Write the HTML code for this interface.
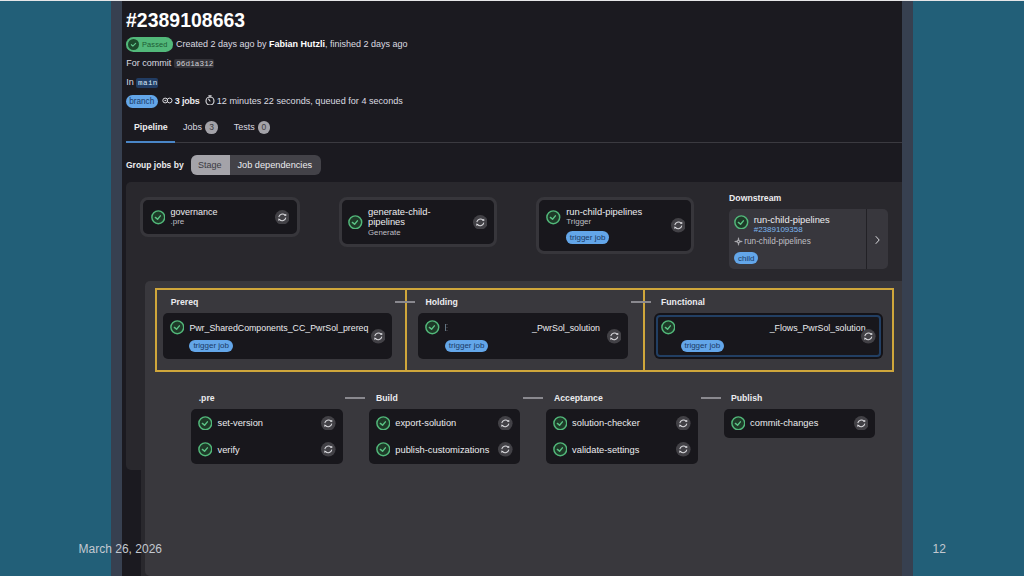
<!DOCTYPE html>
<html><head><meta charset="utf-8">
<style>
*{margin:0;padding:0;box-sizing:border-box}
html,body{width:1024px;height:576px;overflow:hidden;background:#225f78;font-family:"Liberation Sans",sans-serif}
.a{position:absolute}
.t{position:absolute;line-height:1;white-space:nowrap;font-size:9px;color:#ececef}
.ring{position:absolute;border:3px solid #37363b;border-radius:8px;background:#18171c}
.yb{position:absolute;border:2px solid #cfa63b}
</style></head><body>
<div class="a" style="left:0px;top:0px;width:1024px;height:576px;background:#225f78;border-radius:0px;"></div>
<div class="a" style="left:122px;top:0px;width:780px;height:576px;background:#1b1a20;border-radius:0px;"></div>
<div class="t" style="left:126px;top:11.00px;font-size:19.4px;font-weight:700;color:#ffffff;letter-spacing:0.05px;">#2389108663</div>
<div class="a" style="left:126px;top:37px;width:47px;height:14.600000000000001px;background:#52b87a;border-radius:7.3px;"></div>
<svg class="a" style="left:127.7px;top:38.6px" width="11" height="11" viewBox="0 0 14 14"><circle cx="7" cy="7" r="7" fill="#1c4a2c"/><path d="M4.3 7.3 L6.2 9 L9.7 5.5" fill="none" stroke="#5fc48a" stroke-width="1.5" stroke-linecap="round" stroke-linejoin="round"/></svg>
<div class="t" style="left:142px;top:41.00px;font-size:7.4px;color:#1d5b34;letter-spacing:0.15px;">Passed</div>
<div class="t" style="left:176px;top:40.00px;font-size:9px;color:#dcdce0;">Created 2 days ago by <b style="color:#fff">Fabian Hutzli</b>, finished 2 days ago</div>
<div class="t" style="left:126.3px;top:59.00px;font-size:9px;color:#dcdce0;">For commit</div>
<div class="a" style="left:174px;top:59px;width:39.69999999999999px;height:9.299999999999997px;background:#333238;border-radius:2px;"></div>
<div class="t" style="left:176.2px;top:61.00px;font-size:7.6px;color:#d0d0d4;font-family:&quot;Liberation Mono&quot;,monospace;letter-spacing:0.1px;">96d1a312</div>
<div class="t" style="left:126.3px;top:78.00px;font-size:9px;color:#dcdce0;">In</div>
<div class="a" style="left:135.6px;top:78.4px;width:22.700000000000017px;height:9.399999999999991px;background:#213c63;border-radius:2px;"></div>
<div class="t" style="left:138.1px;top:80.00px;font-size:7.6px;color:#d4e4f7;font-family:&quot;Liberation Mono&quot;,monospace;letter-spacing:0.35px;">main</div>
<div class="a" style="left:126px;top:94.8px;width:31.5px;height:12.900000000000006px;background:#63a6e9;border-radius:6.450000000000003px;"><div style="position:absolute;left:0;right:0;top:3.20px;color:#1a3a66;font-size:8.2px;line-height:1;text-align:center;white-space:nowrap">branch</div></div>
<div class="t" style="left:174.8px;top:97.00px;font-size:9px;font-weight:700;color:#ececef;letter-spacing:-0.2px;">3 jobs</div>
<div class="t" style="left:216.8px;top:97.00px;font-size:9.1px;color:#dcdce0;">12 minutes 22 seconds, queued for 4 seconds</div>
<svg class="a" style="left:161.8px;top:96.8px" width="11" height="7" viewBox="0 0 11 7"><circle cx="3.2" cy="3.5" r="2.4" fill="none" stroke="#dcdce0" stroke-width="1"/><circle cx="7.6" cy="3.5" r="2.4" fill="none" stroke="#dcdce0" stroke-width="1"/><circle cx="3.2" cy="3.5" r="0.8" fill="#dcdce0"/></svg>
<svg class="a" style="left:204.8px;top:94.8px" width="10" height="10.5" viewBox="0 0 10 10.5"><circle cx="5" cy="6" r="4" fill="none" stroke="#dcdce0" stroke-width="1.1"/><path d="M3.8 0.8 H6.2 M5 0.8 V2 M5 6 L3.6 4.2" fill="none" stroke="#dcdce0" stroke-width="1.1" stroke-linecap="round"/></svg>
<div class="a" style="left:126px;top:141.5px;width:776px;height:1.0px;background:#3b3a40;border-radius:0px;"></div>
<div class="a" style="left:126px;top:141px;width:49px;height:2px;background:#4a86c7;border-radius:0px;"></div>
<div class="t" style="left:134px;top:123.00px;font-size:8.8px;font-weight:700;color:#ececef;">Pipeline</div>
<div class="t" style="left:183px;top:123.00px;font-size:9px;color:#dcdce0;">Jobs</div>
<div class="a" style="left:205.4px;top:121px;width:12.400000000000006px;height:12.599999999999994px;background:#a3a2a8;border-radius:6.3px;"></div>
<div class="t" style="left:209.2px;top:123.00px;font-size:8.5px;color:#3b3a40;">3</div>
<div class="t" style="left:233.8px;top:123.00px;font-size:9px;color:#dcdce0;">Tests</div>
<div class="a" style="left:257.6px;top:121px;width:12.5px;height:12.599999999999994px;background:#a3a2a8;border-radius:6.3px;"></div>
<div class="t" style="left:261.5px;top:123.00px;font-size:8.5px;color:#3b3a40;">0</div>
<div class="t" style="left:126px;top:161.00px;font-size:8.5px;font-weight:700;color:#ececef;">Group jobs by</div>
<div class="a" style="left:190.7px;top:155.3px;width:130.0px;height:19.899999999999977px;background:#434248;border-radius:6px;"></div>
<div class="a" style="left:190.7px;top:155.3px;width:39.30000000000001px;height:19.899999999999977px;background:#a4a3a9;border-radius:0px;border-radius:6px 0 0 6px;"></div>
<div class="t" style="left:198px;top:161.00px;font-size:9px;color:#3a393f;">Stage</div>
<div class="t" style="left:237.5px;top:161.00px;font-size:9.2px;color:#ececef;">Job dependencies</div>
<div class="a" style="left:126px;top:182px;width:794px;height:288px;background:#29282d;border-radius:5px;"></div>
<div class="ring" style="left:140.2px;top:196.9px;width:159.40000000000003px;height:39.69999999999999px"></div>
<svg class="a" style="left:150.7px;top:210.2px" width="14.6" height="14.6" viewBox="0 0 14 14"><circle cx="7" cy="7" r="6.15" fill="#1e3a28" stroke="#52b87a" stroke-width="1.4"/><path d="M4.2 7.1 L6.3 8.8 L9 5.6" fill="none" stroke="#5cc486" stroke-width="1.35" stroke-linecap="round" stroke-linejoin="round"/></svg>
<div class="t" style="left:170.5px;top:208.00px;font-size:9px;color:#ececef;">governance</div>
<div class="t" style="left:170.5px;top:218.00px;font-size:8px;color:#bfbfc3;">.pre</div>
<svg class="a" style="left:274.70px;top:209.50px" width="14.6" height="14.6" viewBox="0 0 15 15"><circle cx="7.5" cy="7.5" r="7.5" fill="#424146"/><path d="M3.9 7.3 A3.7 3.6 0 0 1 10.3 5.3 M11.1 7.9 A3.7 3.6 0 0 1 4.7 9.8" fill="none" stroke="#d8d8dc" stroke-width="1.05"/><path d="M9.2 5.6 L11.6 6.2 L11.5 3.8 Z M5.8 9.5 L3.4 8.8 L3.5 11.2 Z" fill="#e4e4e8"/></svg>
<div class="ring" style="left:338.6px;top:197px;width:158.39999999999998px;height:49.5px"></div>
<svg class="a" style="left:348.4px;top:214.7px" width="14.6" height="14.6" viewBox="0 0 14 14"><circle cx="7" cy="7" r="6.15" fill="#1e3a28" stroke="#52b87a" stroke-width="1.4"/><path d="M4.2 7.1 L6.3 8.8 L9 5.6" fill="none" stroke="#5cc486" stroke-width="1.35" stroke-linecap="round" stroke-linejoin="round"/></svg>
<div class="t" style="left:368px;top:207.00px;font-size:9.4px;color:#ececef;">generate-child-</div>
<div class="t" style="left:368px;top:217.00px;font-size:9.4px;color:#ececef;">pipelines</div>
<div class="t" style="left:368px;top:229.00px;font-size:7.8px;color:#bfbfc3;">Generate</div>
<svg class="a" style="left:472.70px;top:214.70px" width="14.6" height="14.6" viewBox="0 0 15 15"><circle cx="7.5" cy="7.5" r="7.5" fill="#424146"/><path d="M3.9 7.3 A3.7 3.6 0 0 1 10.3 5.3 M11.1 7.9 A3.7 3.6 0 0 1 4.7 9.8" fill="none" stroke="#d8d8dc" stroke-width="1.05"/><path d="M9.2 5.6 L11.6 6.2 L11.5 3.8 Z M5.8 9.5 L3.4 8.8 L3.5 11.2 Z" fill="#e4e4e8"/></svg>
<div class="ring" style="left:536.3px;top:197px;width:158.20000000000005px;height:57px"></div>
<svg class="a" style="left:546.0px;top:210.1px" width="14.6" height="14.6" viewBox="0 0 14 14"><circle cx="7" cy="7" r="6.15" fill="#1e3a28" stroke="#52b87a" stroke-width="1.4"/><path d="M4.2 7.1 L6.3 8.8 L9 5.6" fill="none" stroke="#5cc486" stroke-width="1.35" stroke-linecap="round" stroke-linejoin="round"/></svg>
<div class="t" style="left:566.2px;top:207.00px;font-size:9.4px;color:#ececef;">run-child-pipelines</div>
<div class="t" style="left:566.2px;top:218.00px;font-size:8px;color:#bfbfc3;">Trigger</div>
<div class="a" style="left:566.2px;top:231.2px;width:42.799999999999955px;height:12.800000000000011px;background:#63a6e9;border-radius:6.400000000000006px;"><div style="position:absolute;left:0;right:0;top:2.80px;color:#1a3a66;font-size:8px;line-height:1;text-align:center;white-space:nowrap">trigger job</div></div>
<svg class="a" style="left:670.50px;top:218.40px" width="14.6" height="14.6" viewBox="0 0 15 15"><circle cx="7.5" cy="7.5" r="7.5" fill="#424146"/><path d="M3.9 7.3 A3.7 3.6 0 0 1 10.3 5.3 M11.1 7.9 A3.7 3.6 0 0 1 4.7 9.8" fill="none" stroke="#d8d8dc" stroke-width="1.05"/><path d="M9.2 5.6 L11.6 6.2 L11.5 3.8 Z M5.8 9.5 L3.4 8.8 L3.5 11.2 Z" fill="#e4e4e8"/></svg>
<div class="t" style="left:729.1px;top:194.00px;font-size:8.7px;font-weight:700;color:#ececef;">Downstream</div>
<div class="a" style="left:729.1px;top:209.3px;width:158.69999999999993px;height:60.099999999999966px;background:#38373d;border-radius:5px;"></div>
<div class="a" style="left:866px;top:209.3px;width:1px;height:60.099999999999966px;background:#222126;border-radius:0px;"></div>
<svg class="a" style="left:734.1px;top:214.6px" width="14.6" height="14.6" viewBox="0 0 14 14"><circle cx="7" cy="7" r="6.15" fill="#1e3a28" stroke="#52b87a" stroke-width="1.4"/><path d="M4.2 7.1 L6.3 8.8 L9 5.6" fill="none" stroke="#5cc486" stroke-width="1.35" stroke-linecap="round" stroke-linejoin="round"/></svg>
<div class="t" style="left:753.7px;top:215.00px;font-size:9.4px;color:#ececef;">run-child-pipelines</div>
<div class="t" style="left:753.7px;top:226.00px;font-size:8px;color:#7cb6ee;">#2389109358</div>
<svg class="a" style="left:733.85px;top:237.3px" width="9" height="9" viewBox="0 0 9 9"><path d="M4.5 0.7 C4.75 3.2 5.3 4.1 8.3 4.5 C5.3 4.9 4.75 5.8 4.5 8.3 C4.25 5.8 3.7 4.9 0.7 4.5 C3.7 4.1 4.25 3.2 4.5 0.7Z" fill="#b8b8bd" stroke="#b8b8bd" stroke-width="0.6" stroke-linejoin="round"/><circle cx="4.5" cy="4.5" r="0.8" fill="#4a494f"/></svg>
<div class="t" style="left:744.3px;top:238.00px;font-size:8.2px;color:#bfbfc3;">run-child-pipelines</div>
<div class="a" style="left:734.4px;top:252.3px;width:23.899999999999977px;height:12.099999999999966px;background:#63a6e9;border-radius:6.049999999999983px;"><div style="position:absolute;left:0;right:0;top:2.70px;color:#1a3a66;font-size:8px;line-height:1;text-align:center;white-space:nowrap">child</div></div>
<svg class="a" style="left:873.5px;top:234.5px" width="7" height="10" viewBox="0 0 7 10"><path d="M2 1.5 L5.2 5 L2 8.5" fill="none" stroke="#dcdce0" stroke-width="1" stroke-linecap="round" stroke-linejoin="round"/></svg>
<div class="a" style="left:141px;top:280.6px;width:789px;height:295.4px;background:#29282d;border-radius:0px;"></div>
<div class="a" style="left:145px;top:280.6px;width:785px;height:295.4px;background:#39383d;border-radius:5px;"></div>
<div class="yb" style="left:155px;top:288px;width:252px;height:84px"></div>
<div class="yb" style="border-left-width:0;left:405px;top:288px;width:240px;height:84px"></div>
<div class="yb" style="left:643px;top:288px;width:251px;height:84px"></div>
<div class="t" style="left:170.8px;top:298.00px;font-size:8.7px;font-weight:700;color:#ececef;">Prereq</div>
<div class="t" style="left:425.5px;top:298.00px;font-size:8.7px;font-weight:700;color:#ececef;">Holding</div>
<div class="t" style="left:661px;top:298.00px;font-size:8.7px;font-weight:700;color:#ececef;">Functional</div>
<div class="a" style="left:395px;top:301px;width:20px;height:2px;background:#8a898f;border-radius:0px;"></div>
<div class="a" style="left:631px;top:301px;width:20px;height:2px;background:#8a898f;border-radius:0px;"></div>
<div class="a" style="left:163.2px;top:313px;width:229.3px;height:46.19999999999999px;background:#18171c;border-radius:5px;"></div>
<svg class="a" style="left:169.89999999999998px;top:320.09999999999997px" width="14.6" height="14.6" viewBox="0 0 14 14"><circle cx="7" cy="7" r="6.15" fill="#1e3a28" stroke="#52b87a" stroke-width="1.4"/><path d="M4.2 7.1 L6.3 8.8 L9 5.6" fill="none" stroke="#5cc486" stroke-width="1.35" stroke-linecap="round" stroke-linejoin="round"/></svg>
<div class="t" style="left:189.4px;top:324.00px;font-size:8.8px;color:#ececef;">Pwr_SharedComponents_CC_PwrSol_prereq</div>
<div class="a" style="left:189.4px;top:340px;width:43.599999999999994px;height:11.800000000000011px;background:#63a6e9;border-radius:5.900000000000006px;"><div style="position:absolute;left:0;right:0;top:2.00px;color:#1a3a66;font-size:8px;line-height:1;text-align:center;white-space:nowrap">trigger job</div></div>
<svg class="a" style="left:370.70px;top:329.00px" width="14.6" height="14.6" viewBox="0 0 15 15"><circle cx="7.5" cy="7.5" r="7.5" fill="#424146"/><path d="M3.9 7.3 A3.7 3.6 0 0 1 10.3 5.3 M11.1 7.9 A3.7 3.6 0 0 1 4.7 9.8" fill="none" stroke="#d8d8dc" stroke-width="1.05"/><path d="M9.2 5.6 L11.6 6.2 L11.5 3.8 Z M5.8 9.5 L3.4 8.8 L3.5 11.2 Z" fill="#e4e4e8"/></svg>
<div class="a" style="left:418px;top:313px;width:210px;height:46.19999999999999px;background:#18171c;border-radius:5px;"></div>
<svg class="a" style="left:425.09999999999997px;top:320.09999999999997px" width="14.6" height="14.6" viewBox="0 0 14 14"><circle cx="7" cy="7" r="6.15" fill="#1e3a28" stroke="#52b87a" stroke-width="1.4"/><path d="M4.2 7.1 L6.3 8.8 L9 5.6" fill="none" stroke="#5cc486" stroke-width="1.35" stroke-linecap="round" stroke-linejoin="round"/></svg>
<div class="t" style="left:532px;top:324.00px;font-size:8.8px;color:#ececef;">_PwrSol_solution</div>
<div class="a" style="left:445px;top:324px;width:1.1999999999999886px;height:7px;background:rgba(160,195,215,0.55);border-radius:0px;"></div>
<div class="a" style="left:446px;top:324px;width:2px;height:1px;background:rgba(160,160,170,0.25);border-radius:0px;"></div>
<div class="a" style="left:446px;top:327px;width:1.5px;height:1px;background:rgba(160,160,170,0.2);border-radius:0px;"></div>
<div class="a" style="left:446px;top:330px;width:2px;height:1px;background:rgba(160,160,170,0.22);border-radius:0px;"></div>
<div class="a" style="left:445px;top:340px;width:43.30000000000001px;height:11.800000000000011px;background:#63a6e9;border-radius:5.900000000000006px;"><div style="position:absolute;left:0;right:0;top:2.00px;color:#1a3a66;font-size:8px;line-height:1;text-align:center;white-space:nowrap">trigger job</div></div>
<svg class="a" style="left:606.70px;top:329.00px" width="14.6" height="14.6" viewBox="0 0 15 15"><circle cx="7.5" cy="7.5" r="7.5" fill="#424146"/><path d="M3.9 7.3 A3.7 3.6 0 0 1 10.3 5.3 M11.1 7.9 A3.7 3.6 0 0 1 4.7 9.8" fill="none" stroke="#d8d8dc" stroke-width="1.05"/><path d="M9.2 5.6 L11.6 6.2 L11.5 3.8 Z M5.8 9.5 L3.4 8.8 L3.5 11.2 Z" fill="#e4e4e8"/></svg>
<div class="a" style="left:656px;top:315px;width:225px;height:42px;background:#18171c;border-radius:4px;border:2px solid #223f63;box-shadow:0 0 0 2px #141318;"></div>
<svg class="a" style="left:660.9000000000001px;top:320.4px" width="14.6" height="14.6" viewBox="0 0 14 14"><circle cx="7" cy="7" r="6.15" fill="#1e3a28" stroke="#52b87a" stroke-width="1.4"/><path d="M4.2 7.1 L6.3 8.8 L9 5.6" fill="none" stroke="#5cc486" stroke-width="1.35" stroke-linecap="round" stroke-linejoin="round"/></svg>
<div class="t" style="left:769.7px;top:324.00px;font-size:8.8px;color:#ececef;">_Flows_PwrSol_solution</div>
<div class="a" style="left:680.6px;top:339.8px;width:43.39999999999998px;height:11.899999999999977px;background:#63a6e9;border-radius:5.949999999999989px;"><div style="position:absolute;left:0;right:0;top:2.20px;color:#1a3a66;font-size:8px;line-height:1;text-align:center;white-space:nowrap">trigger job</div></div>
<svg class="a" style="left:861.30px;top:329.10px" width="14.6" height="14.6" viewBox="0 0 15 15"><circle cx="7.5" cy="7.5" r="7.5" fill="#424146"/><path d="M3.9 7.3 A3.7 3.6 0 0 1 10.3 5.3 M11.1 7.9 A3.7 3.6 0 0 1 4.7 9.8" fill="none" stroke="#d8d8dc" stroke-width="1.05"/><path d="M9.2 5.6 L11.6 6.2 L11.5 3.8 Z M5.8 9.5 L3.4 8.8 L3.5 11.2 Z" fill="#e4e4e8"/></svg>
<div class="t" style="left:198.7px;top:394.00px;font-size:8.7px;font-weight:700;color:#ececef;">.pre</div>
<div class="t" style="left:376px;top:394.00px;font-size:8.7px;font-weight:700;color:#ececef;">Build</div>
<div class="t" style="left:554px;top:394.00px;font-size:8.7px;font-weight:700;color:#ececef;">Acceptance</div>
<div class="t" style="left:730.9px;top:394.00px;font-size:8.7px;font-weight:700;color:#ececef;">Publish</div>
<div class="a" style="left:345.3px;top:397px;width:19.69999999999999px;height:2px;background:#8a898f;border-radius:0px;"></div>
<div class="a" style="left:523.2px;top:397px;width:19.799999999999955px;height:2px;background:#8a898f;border-radius:0px;"></div>
<div class="a" style="left:701px;top:397px;width:19.5px;height:2px;background:#8a898f;border-radius:0px;"></div>
<div class="a" style="left:191.2px;top:409px;width:151.60000000000002px;height:54.80000000000001px;background:#18171c;border-radius:5px;"></div>
<svg class="a" style="left:197.89999999999998px;top:415.8px" width="14.6" height="14.6" viewBox="0 0 14 14"><circle cx="7" cy="7" r="6.15" fill="#1e3a28" stroke="#52b87a" stroke-width="1.4"/><path d="M4.2 7.1 L6.3 8.8 L9 5.6" fill="none" stroke="#5cc486" stroke-width="1.35" stroke-linecap="round" stroke-linejoin="round"/></svg>
<div class="t" style="left:217.5px;top:419.00px;font-size:9.3px;color:#ececef;">set-version</div>
<svg class="a" style="left:321.30px;top:415.80px" width="14.6" height="14.6" viewBox="0 0 15 15"><circle cx="7.5" cy="7.5" r="7.5" fill="#424146"/><path d="M3.9 7.3 A3.7 3.6 0 0 1 10.3 5.3 M11.1 7.9 A3.7 3.6 0 0 1 4.7 9.8" fill="none" stroke="#d8d8dc" stroke-width="1.05"/><path d="M9.2 5.6 L11.6 6.2 L11.5 3.8 Z M5.8 9.5 L3.4 8.8 L3.5 11.2 Z" fill="#e4e4e8"/></svg>
<svg class="a" style="left:197.89999999999998px;top:442.2px" width="14.6" height="14.6" viewBox="0 0 14 14"><circle cx="7" cy="7" r="6.15" fill="#1e3a28" stroke="#52b87a" stroke-width="1.4"/><path d="M4.2 7.1 L6.3 8.8 L9 5.6" fill="none" stroke="#5cc486" stroke-width="1.35" stroke-linecap="round" stroke-linejoin="round"/></svg>
<div class="t" style="left:217.5px;top:446.00px;font-size:9.3px;color:#ececef;">verify</div>
<svg class="a" style="left:321.30px;top:442.20px" width="14.6" height="14.6" viewBox="0 0 15 15"><circle cx="7.5" cy="7.5" r="7.5" fill="#424146"/><path d="M3.9 7.3 A3.7 3.6 0 0 1 10.3 5.3 M11.1 7.9 A3.7 3.6 0 0 1 4.7 9.8" fill="none" stroke="#d8d8dc" stroke-width="1.05"/><path d="M9.2 5.6 L11.6 6.2 L11.5 3.8 Z M5.8 9.5 L3.4 8.8 L3.5 11.2 Z" fill="#e4e4e8"/></svg>
<div class="a" style="left:369px;top:409px;width:150.79999999999995px;height:54.80000000000001px;background:#18171c;border-radius:5px;"></div>
<svg class="a" style="left:375.7px;top:415.8px" width="14.6" height="14.6" viewBox="0 0 14 14"><circle cx="7" cy="7" r="6.15" fill="#1e3a28" stroke="#52b87a" stroke-width="1.4"/><path d="M4.2 7.1 L6.3 8.8 L9 5.6" fill="none" stroke="#5cc486" stroke-width="1.35" stroke-linecap="round" stroke-linejoin="round"/></svg>
<div class="t" style="left:395.3px;top:419.00px;font-size:9.3px;color:#ececef;">export-solution</div>
<svg class="a" style="left:498.30px;top:415.80px" width="14.6" height="14.6" viewBox="0 0 15 15"><circle cx="7.5" cy="7.5" r="7.5" fill="#424146"/><path d="M3.9 7.3 A3.7 3.6 0 0 1 10.3 5.3 M11.1 7.9 A3.7 3.6 0 0 1 4.7 9.8" fill="none" stroke="#d8d8dc" stroke-width="1.05"/><path d="M9.2 5.6 L11.6 6.2 L11.5 3.8 Z M5.8 9.5 L3.4 8.8 L3.5 11.2 Z" fill="#e4e4e8"/></svg>
<svg class="a" style="left:375.7px;top:442.2px" width="14.6" height="14.6" viewBox="0 0 14 14"><circle cx="7" cy="7" r="6.15" fill="#1e3a28" stroke="#52b87a" stroke-width="1.4"/><path d="M4.2 7.1 L6.3 8.8 L9 5.6" fill="none" stroke="#5cc486" stroke-width="1.35" stroke-linecap="round" stroke-linejoin="round"/></svg>
<div class="t" style="left:395.3px;top:446.00px;font-size:9.3px;color:#ececef;">publish-customizations</div>
<svg class="a" style="left:498.30px;top:442.20px" width="14.6" height="14.6" viewBox="0 0 15 15"><circle cx="7.5" cy="7.5" r="7.5" fill="#424146"/><path d="M3.9 7.3 A3.7 3.6 0 0 1 10.3 5.3 M11.1 7.9 A3.7 3.6 0 0 1 4.7 9.8" fill="none" stroke="#d8d8dc" stroke-width="1.05"/><path d="M9.2 5.6 L11.6 6.2 L11.5 3.8 Z M5.8 9.5 L3.4 8.8 L3.5 11.2 Z" fill="#e4e4e8"/></svg>
<div class="a" style="left:545.8px;top:409px;width:152.10000000000002px;height:54.80000000000001px;background:#18171c;border-radius:5px;"></div>
<svg class="a" style="left:552.5px;top:415.8px" width="14.6" height="14.6" viewBox="0 0 14 14"><circle cx="7" cy="7" r="6.15" fill="#1e3a28" stroke="#52b87a" stroke-width="1.4"/><path d="M4.2 7.1 L6.3 8.8 L9 5.6" fill="none" stroke="#5cc486" stroke-width="1.35" stroke-linecap="round" stroke-linejoin="round"/></svg>
<div class="t" style="left:572.0999999999999px;top:419.00px;font-size:9.3px;color:#ececef;">solution-checker</div>
<svg class="a" style="left:676.40px;top:415.80px" width="14.6" height="14.6" viewBox="0 0 15 15"><circle cx="7.5" cy="7.5" r="7.5" fill="#424146"/><path d="M3.9 7.3 A3.7 3.6 0 0 1 10.3 5.3 M11.1 7.9 A3.7 3.6 0 0 1 4.7 9.8" fill="none" stroke="#d8d8dc" stroke-width="1.05"/><path d="M9.2 5.6 L11.6 6.2 L11.5 3.8 Z M5.8 9.5 L3.4 8.8 L3.5 11.2 Z" fill="#e4e4e8"/></svg>
<svg class="a" style="left:552.5px;top:442.2px" width="14.6" height="14.6" viewBox="0 0 14 14"><circle cx="7" cy="7" r="6.15" fill="#1e3a28" stroke="#52b87a" stroke-width="1.4"/><path d="M4.2 7.1 L6.3 8.8 L9 5.6" fill="none" stroke="#5cc486" stroke-width="1.35" stroke-linecap="round" stroke-linejoin="round"/></svg>
<div class="t" style="left:572.0999999999999px;top:446.00px;font-size:9.3px;color:#ececef;">validate-settings</div>
<svg class="a" style="left:676.40px;top:442.20px" width="14.6" height="14.6" viewBox="0 0 15 15"><circle cx="7.5" cy="7.5" r="7.5" fill="#424146"/><path d="M3.9 7.3 A3.7 3.6 0 0 1 10.3 5.3 M11.1 7.9 A3.7 3.6 0 0 1 4.7 9.8" fill="none" stroke="#d8d8dc" stroke-width="1.05"/><path d="M9.2 5.6 L11.6 6.2 L11.5 3.8 Z M5.8 9.5 L3.4 8.8 L3.5 11.2 Z" fill="#e4e4e8"/></svg>
<div class="a" style="left:723.8px;top:409px;width:151.4000000000001px;height:28.69999999999999px;background:#18171c;border-radius:5px;"></div>
<svg class="a" style="left:730.5px;top:415.8px" width="14.6" height="14.6" viewBox="0 0 14 14"><circle cx="7" cy="7" r="6.15" fill="#1e3a28" stroke="#52b87a" stroke-width="1.4"/><path d="M4.2 7.1 L6.3 8.8 L9 5.6" fill="none" stroke="#5cc486" stroke-width="1.35" stroke-linecap="round" stroke-linejoin="round"/></svg>
<div class="t" style="left:750.0999999999999px;top:419.00px;font-size:9.3px;color:#ececef;">commit-changes</div>
<svg class="a" style="left:853.70px;top:415.80px" width="14.6" height="14.6" viewBox="0 0 15 15"><circle cx="7.5" cy="7.5" r="7.5" fill="#424146"/><path d="M3.9 7.3 A3.7 3.6 0 0 1 10.3 5.3 M11.1 7.9 A3.7 3.6 0 0 1 4.7 9.8" fill="none" stroke="#d8d8dc" stroke-width="1.05"/><path d="M9.2 5.6 L11.6 6.2 L11.5 3.8 Z M5.8 9.5 L3.4 8.8 L3.5 11.2 Z" fill="#e4e4e8"/></svg>
<div class="a" style="left:902px;top:0px;width:11px;height:576px;background:#374050;border-radius:0px;"></div>
<div class="a" style="left:913px;top:0px;width:111px;height:576px;background:#225f78;border-radius:0px;"></div>
<div class="a" style="left:111px;top:0px;width:11px;height:576px;background:#374050;border-radius:0px;"></div>
<div class="a" style="left:0px;top:0px;width:1024px;height:1px;background:#e6e6e8;border-radius:0px;"></div>
<div class="t" style="left:78.6px;top:543.00px;font-size:12px;color:#c3c8d0;">March 26, 2026</div>
<div class="t" style="left:932.5px;top:543.00px;font-size:12px;color:#c3c8d0;">12</div>
</body></html>
